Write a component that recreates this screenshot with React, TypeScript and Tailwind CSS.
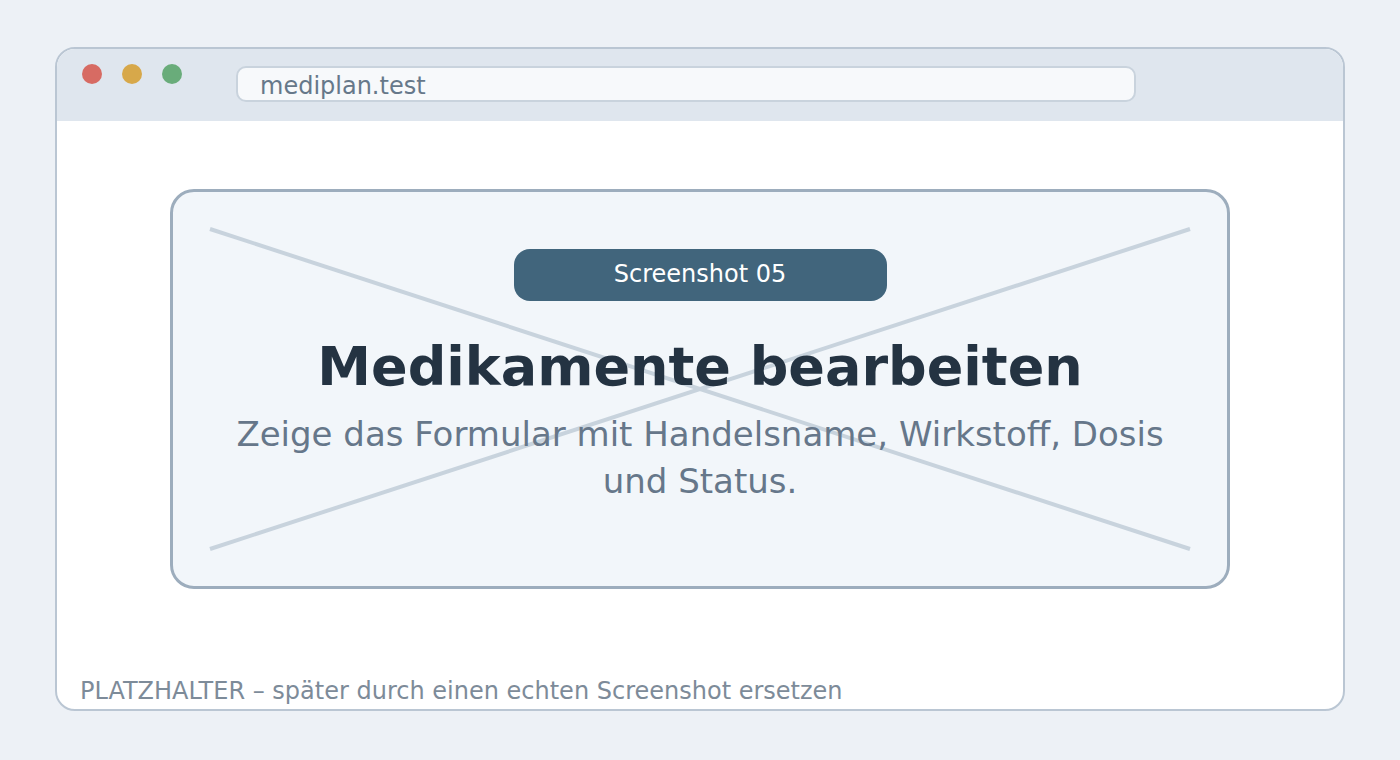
import React from 'react';

const font = { fontFamily: '"DejaVu Sans", "Liberation Sans", sans-serif' };

const dots = ['bg-[#d76b63]', 'bg-[#d7a84a]', 'bg-[#69ac7a]'];

const BrowserBar: React.FC = () => (
  <div className="flex h-[72px] shrink-0 items-start bg-[#dfe6ee] pl-[25px]">
    <div className="mt-[15px] flex gap-[20px]">
      {dots.map((c) => (
        <span key={c} className={`block h-[20px] w-[20px] rounded-full ${c}`} />
      ))}
    </div>
    <div className="ml-[54px] mt-[17px] flex h-[36px] w-[900px] items-center rounded-[10px] border-2 border-[#c9d3dd] bg-[#f7f9fb] pl-[22px] pt-[3px] text-[24px] leading-[28px] text-[#66788a]">
      mediplan.test
    </div>
  </div>
);

const PlaceholderCard: React.FC = () => (
  <div className="relative mx-auto mt-[68px] flex h-[400px] w-[1060px] flex-col items-center rounded-[24px] border-[3px] border-[#9dadbd] bg-[#f2f6fa]">
    {/* crossed-out placeholder lines */}
    <svg className="absolute inset-0" width="1054" height="394" viewBox="0 0 1054 394">
      <line x1="37" y1="37" x2="1017" y2="357" stroke="#c8d3dd" strokeWidth="4" />
      <line x1="37" y1="357" x2="1017" y2="37" stroke="#c8d3dd" strokeWidth="4" />
    </svg>
    <div className="relative mt-[57px] flex h-[52px] w-[373px] items-center justify-center rounded-[16px] bg-[#41657c] pb-[3px] text-[24px] leading-[28px] text-white">
      Screenshot 05
    </div>
    <h1 className="relative mt-[36px] text-[54px] font-bold leading-[60px] text-[#243342]">
      Medikamente bearbeiten
    </h1>
    <p className="relative mt-[14px] w-[980px] text-center text-[34px] leading-[47px] text-[#66778a]">
      Zeige das Formular mit Handelsname, Wirkstoff, Dosis
      <br />
      und Status.
    </p>
  </div>
);

export default function App() {
  return (
    <div className="h-[760px] w-[1400px] bg-[#edf1f6] pl-[55px] pt-[47px]" style={font}>
      <div className="flex h-[664px] w-[1290px] flex-col overflow-hidden rounded-[20px] border-2 border-[#bac6d3] bg-white">
        <BrowserBar />
        <PlaceholderCard />
        <div className="mt-auto pb-[4px] pl-[23px] text-[24px] leading-[28px] text-[#7d8b99]">
          PLATZHALTER – später durch einen echten Screenshot ersetzen
        </div>
      </div>
    </div>
  );
}
